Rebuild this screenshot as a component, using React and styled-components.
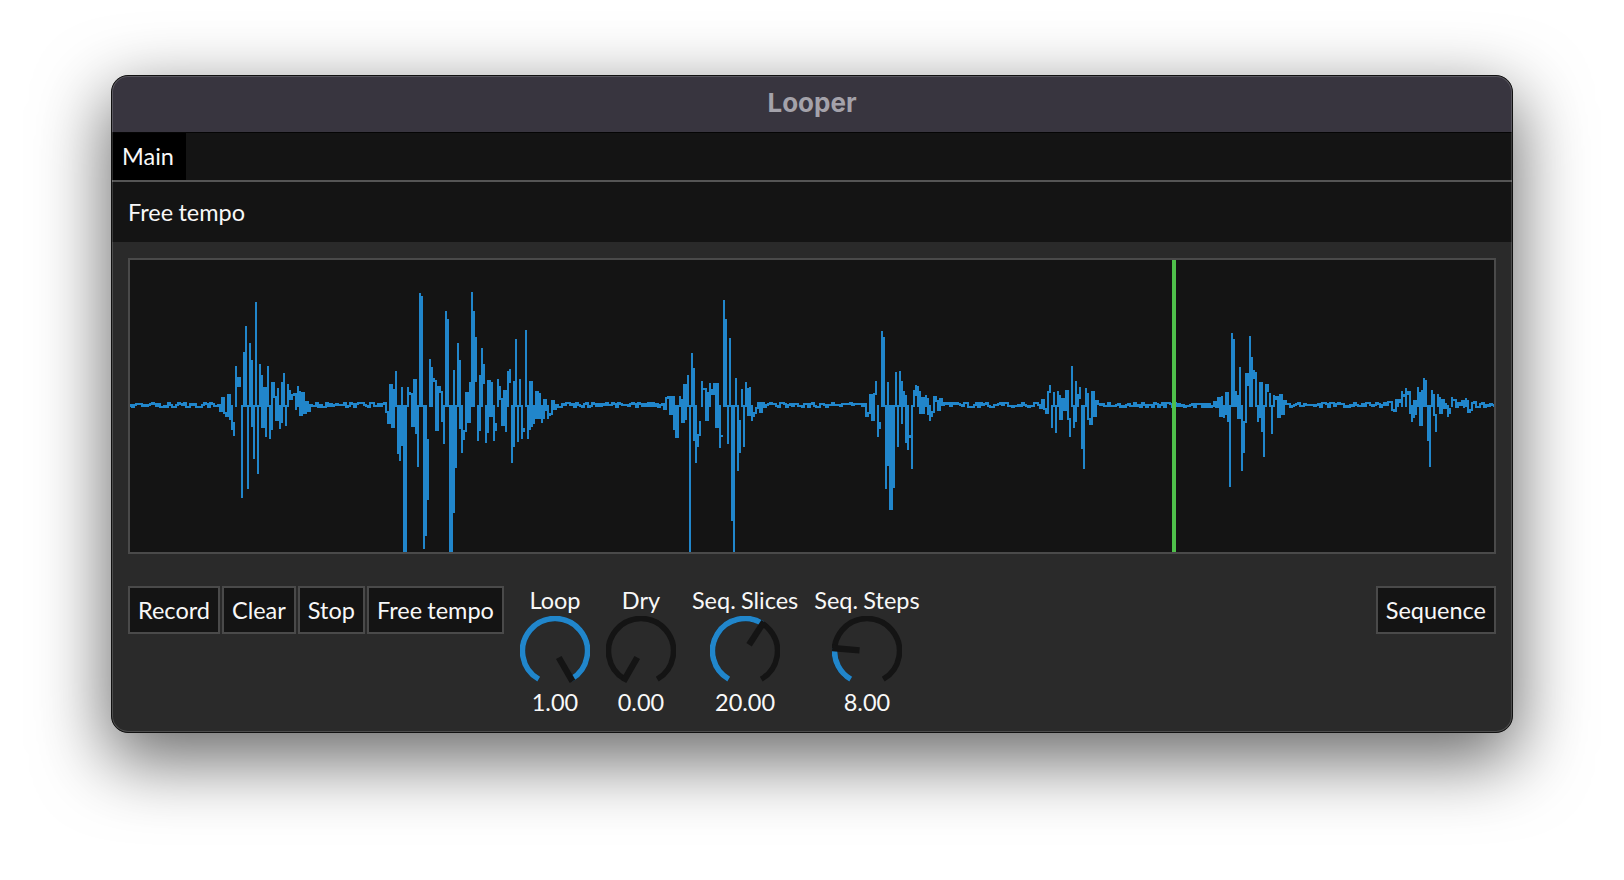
import React from "react";
import styled, { createGlobalStyle } from "styled-components";

const UI_FONT = `Lato, "Noto Sans", sans-serif`;

const GlobalStyle = createGlobalStyle`
  html, body {
    margin: 0;
    background: #fff;
    overflow: hidden;
  }
`;

// peaks read off the recording, in page pixels: [x, y], y above 406 goes up
const PEAKS = [
  [235, 367], [241, 353], [245, 327], [250, 344], [256, 303], [260, 365], [267, 367], [283, 374], [288, 385], [298, 387],
  [231, 429], [242, 497], [247, 488], [253, 458], [258, 473], [269, 438], [280, 428], [285, 425],
  [396, 372], [407, 388], [419, 294], [421, 297], [429, 360], [432, 368], [445, 312], [447, 320], [458, 344], [471, 293], [473, 312], [482, 349], [498, 380], [507, 372], [515, 340], [526, 331], [520, 380],
  [403, 553], [405, 553], [397, 453], [399, 460], [418, 466], [424, 548], [426, 535], [449, 553], [451, 553], [456, 467], [462, 452], [444, 443], [477, 440], [486, 442], [493, 440], [511, 462], [516, 441], [522, 438], [527, 438], [533, 423], [541, 422], [547, 418],
  [677, 397], [676, 437],
  [675, 437], [690, 553], [692, 354], [688, 376], [696, 462], [701, 382], [710, 384], [719, 447], [723, 301], [725, 320], [727, 443], [729, 339], [733, 553], [731, 520], [736, 379], [738, 470], [741, 390], [744, 446], [746, 383], [751, 420],
  [877, 436], [881, 332], [883, 338], [885, 488], [889, 509], [891, 509], [893, 487], [896, 373], [898, 446], [899, 372], [903, 392], [907, 449], [911, 468], [913, 391], [917, 387], [925, 396], [930, 420],
  [1051, 427], [1053, 393], [1056, 432], [1058, 392], [1072, 367], [1071, 427], [1077, 395], [1083, 468], [1081, 448], [1086, 389],
  [1224, 417], [1231, 334], [1233, 340], [1230, 486], [1235, 392], [1242, 470], [1249, 337], [1251, 358], [1256, 373], [1257, 421], [1263, 456], [1264, 385], [1271, 433], [1270, 394], [1273, 396],
  [1397, 400], [1402, 392], [1406, 389], [1411, 421], [1417, 388], [1423, 379], [1425, 381], [1430, 466], [1428, 440], [1432, 391], [1437, 395], [1447, 416], [1451, 398], [1466, 399],
];

const BASE_Y = 406;
const STEP = 2;

function buildWave() {
  let seed = 11;
  const rnd = () => {
    seed = (seed * 16807) % 2147483647;
    return seed / 2147483647;
  };

  // pin each peak to the nearest free column
  const pinned = {};
  [...PEAKS]
    .sort((a, b) => Math.abs(b[1] - BASE_Y) - Math.abs(a[1] - BASE_Y))
    .forEach(([x, y]) => {
      let col = Math.round((x - 130) / STEP);
      if (pinned[col] !== undefined) col += 1;
      if (pinned[col] === undefined) pinned[col] = y;
    });

  const count = Math.floor(1364 / STEP);
  let sign = 1;
  let prev = BASE_Y;
  let d = "";
  for (let i = 0; i <= count; i += 1) {
    const x = 130 + i * STEP;
    let env = 0;
    PEAKS.forEach(([px, py]) => {
      const dist = Math.abs(px - x);
      if (dist > 11) return;
      env = Math.max(env, Math.min(Math.abs(py - BASE_Y), 44) * Math.exp(-dist / 10));
    });
    sign = rnd() < 0.8 ? -sign : sign;
    const noise = Math.round((rnd() - 0.5) * 5);
    let y = BASE_Y - 1 + noise + sign * env * (0.35 + rnd() * 0.65);
    let from = prev;
    if (pinned[i] !== undefined) {
      y = pinned[i];
      // a peak always reaches back to the baseline, so side by side peaks stay solid
      from = BASE_Y;
    }
    d += `M${i * STEP} ${Math.round(from - 260)}V${Math.round(y - 260)}`;
    // the next column repeats most of a peak, which gives the stepped tips
    prev = pinned[i] !== undefined ? BASE_Y + (y - BASE_Y) * 0.72 : y;
  }
  return d;
}

const WAVE_PATH = buildWave();

const polar = (r, deg) => {
  const a = (deg * Math.PI) / 180;
  return [35 + r * Math.sin(a), 35 - r * Math.cos(a)];
};

const arc = (from, to) => {
  const [x1, y1] = polar(32.5, from);
  const [x2, y2] = polar(32.5, to);
  const large = to - from > 180 ? 1 : 0;
  return `M${x1} ${y1}A32.5 32.5 0 ${large} 1 ${x2} ${y2}`;
};

function Knob({ label, value, angle }) {
  const [nx1, ny1] = polar(7.5, angle);
  const [nx2, ny2] = polar(35, angle);
  return (
    <KnobColumn>
      <KnobText>{label}</KnobText>
      <KnobDial viewBox="0 0 70 70">
        <path d={arc(-150, 150)} fill="none" stroke="#141414" strokeWidth="5.6" />
        <path d={arc(-150, angle)} fill="none" stroke="#2186cb" strokeWidth="5.6" />
        <line x1={nx1} y1={ny1} x2={nx2} y2={ny2} stroke="#141414" strokeWidth="6.4" />
      </KnobDial>
      <KnobText>{value}</KnobText>
    </KnobColumn>
  );
}

export default function App() {
  return (
    <Page>
      <GlobalStyle />
      <Window>
        <TitleBar>Looper</TitleBar>
        <TabRow>
          <Tab>Main</Tab>
        </TabRow>
        <ModeBar>Free tempo</ModeBar>
        <Content>
          <WaveBox>
            <WaveSvg viewBox="0 0 1364 292" preserveAspectRatio="none">
              <WaveTrace d={WAVE_PATH} />
              <rect x="1042" y="0" width="4" height="292" fill="#4fc04b" />
            </WaveSvg>
          </WaveBox>
          <Controls>
            <ButtonGroup>
              <Button>Record</Button>
              <Button>Clear</Button>
              <Button>Stop</Button>
              <Button>Free tempo</Button>
            </ButtonGroup>
            <Knobs>
              <Knob label="Loop" value="1.00" angle={150} />
              <Knob label="Dry" value="0.00" angle={-150} />
              <Knob label="Seq. Slices" value="20.00" angle={33} />
              <Knob label="Seq. Steps" value="8.00" angle={-85} />
            </Knobs>
            <Button>Sequence</Button>
          </Controls>
        </Content>
      </Window>
    </Page>
  );
}

const Page = styled.div`
  padding: 75px 111px 0;
  height: 880px;
  box-sizing: border-box;
  font-family: ${UI_FONT};
  font-size: 23.5px;
  word-spacing: -0.8px;
  color: #f8f8f8;
`;

const Window = styled.div`
  width: 1402px;
  height: 658px;
  box-sizing: border-box;
  display: flex;
  flex-direction: column;
  background: #2a2a2a;
  border: 1px solid #111;
  border-radius: 17px;
  overflow: hidden;
  box-shadow: 0 24px 70px 4px rgba(0, 0, 0, 0.58);
  position: relative;

  &::after {
    content: "";
    position: absolute;
    inset: 0;
    border-radius: 16px;
    box-shadow: inset 0 0 0 1px rgba(255, 255, 255, 0.17);
    pointer-events: none;
  }
`;

const TitleBar = styled.div`
  height: 57px;
  flex: none;
  display: flex;
  align-items: center;
  justify-content: center;
  padding-bottom: 4px;
  background: #38353f;
  border-bottom: 1px solid #050505;
  box-sizing: border-box;
  font-family: "Inter", "Liberation Sans", sans-serif;
  font-size: 26px;
  font-weight: 700;
  color: #a4a2aa;
`;

const TabRow = styled.div`
  height: 49px;
  flex: none;
  display: flex;
  box-sizing: border-box;
  background: #141414;
  border-bottom: 2px solid #555;
`;

const Tab = styled.div`
  width: 74px;
  box-sizing: border-box;
  padding: 0 0 2px 10px;
  display: flex;
  align-items: center;
  background: #000;
`;

const ModeBar = styled.div`
  height: 60px;
  flex: none;
  display: flex;
  align-items: center;
  padding-left: 16px;
  background: #141414;
`;

const Content = styled.div`
  flex: 1;
  padding: 16px 16px 0;
  display: flex;
  flex-direction: column;
  gap: 32px;
`;

const WaveBox = styled.div`
  height: 296px;
  box-sizing: border-box;
  border: 2px solid #4a4a4a;
  background: #141414;
`;

const WaveSvg = styled.svg`
  display: block;
  width: 100%;
  height: 100%;
`;

const WaveTrace = styled.path`
  fill: none;
  stroke: #2186cb;
  stroke-width: 2;
  stroke-linecap: square;
  shape-rendering: crispEdges;
`;

const Controls = styled.div`
  display: flex;
  align-items: flex-start;
  justify-content: space-between;
`;

const ButtonGroup = styled.div`
  display: flex;
  gap: 2px;
`;

const Button = styled.div`
  height: 48px;
  box-sizing: border-box;
  padding: 0 8px;
  display: flex;
  align-items: center;
  background: #141414;
  border: 2px solid #4a4a4a;
`;

const Knobs = styled.div`
  display: flex;
  flex: 1;
  gap: 16px;
  margin-left: 16px;
`;

const KnobColumn = styled.div`
  min-width: 70px;
  display: flex;
  flex-direction: column;
  align-items: center;
`;

const KnobText = styled.div`
  line-height: 28px;
  height: 30px;
  &:last-child {
    margin-top: 2px;
  }
`;

const KnobDial = styled.svg`
  display: block;
  width: 70px;
  height: 70px;
`;
